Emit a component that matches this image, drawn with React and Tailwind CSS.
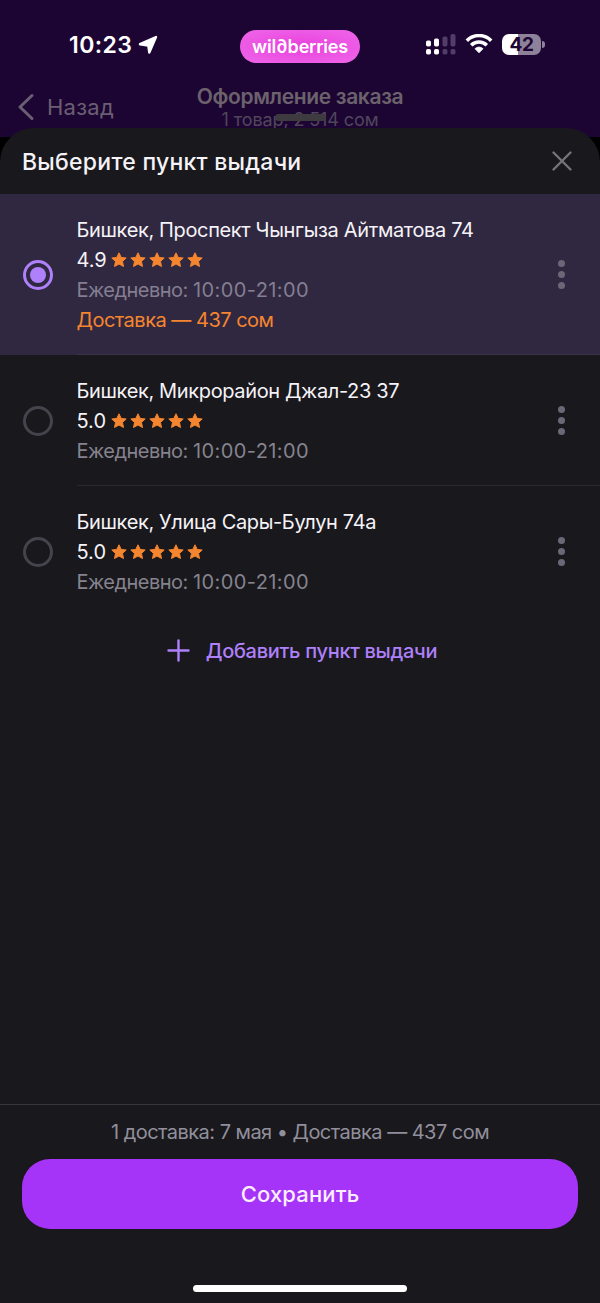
import { useState } from "react";

const points = [
  {
    id: 1,
    address: "Бишкек, Проспект Чынгыза Айтматова 74",
    rating: "4.9",
    hours: "10:00-21:00",
    delivery: "Доставка — 437 сом",
  },
  {
    id: 2,
    address: "Бишкек, Микрорайон Джал-23 37",
    rating: "5.0",
    hours: "10:00-21:00",
  },
  {
    id: 3,
    address: "Бишкек, Улица Сары-Булун 74а",
    rating: "5.0",
    hours: "10:00-21:00",
  },
];

function Star() {
  return (
    <svg width="16" height="16" viewBox="0 0 16 16">
      <path
        d="M8 .8l2.200 4.600 5 .6-3.700 3.400 1 5.100L8 12l-4.500 2.500 1-5.100L.8 6l5-.6z"
        fill="#f5852f"
        stroke="#f5852f"
        strokeWidth="1"
        strokeLinejoin="round"
      />
    </svg>
  );
}

function StatusBar() {
  return (
    <div className="flex h-[33px] items-center pl-[69px] text-white">
      <div className="flex w-[171px] items-center pb-[3px]">
        <span className="w-[69px] whitespace-nowrap text-[23px] font-semibold tracking-[0.45px]">
          10:23
        </span>
        <svg width="20" height="20" viewBox="0 0 20 20" className="-mt-[1px]">
          <path
            d="M18 2L11.300 17.600 10.300 10.600 2 9.200z"
            fill="#fff"
            stroke="#fff"
            strokeWidth="2.400"
            strokeLinejoin="round"
          />
        </svg>
      </div>
      <div
        aria-label="wildberries"
        className="flex h-[33px] w-[120px] items-center justify-center rounded-full bg-radial from-[#e83fdc] to-[#ef66ea]">
        <span className="whitespace-nowrap text-[18px] font-semibold leading-none tracking-[-0.2px]">
          wil∂berries
        </span>
      </div>
      <div className="ml-[65px] flex items-center pb-[5px]">
        <svg width="32" height="21" viewBox="0 0 32 21">
          <g fill="#fff">
            <rect x="1" y="6.500" width="5" height="6" rx="1.800" />
            <rect x="1" y="15" width="5" height="5.500" rx="1.800" />
            <rect x="9" y="4.500" width="5" height="8" rx="1.800" />
            <rect x="9" y="15" width="5" height="5.500" rx="1.800" />
          </g>
          <g fill="#513d67">
            <rect x="17.500" y="2.500" width="5" height="10" rx="1.800" />
            <rect x="17.500" y="15" width="5" height="5.500" rx="1.800" />
            <rect x="25.500" y="0" width="5" height="12.500" rx="1.800" />
            <rect x="25.500" y="15" width="5" height="5.500" rx="1.800" />
          </g>
        </svg>
        <svg width="28" height="20" viewBox="0 0 28 20" className="ml-[8px]">
          <g fill="none" stroke="#fff" strokeWidth="3.500">
            <path d="M1.800 6.700a17 17 0 0 1 24.400 0" />
            <path d="M6.200 11.300a11 11 0 0 1 15.600 0" />
          </g>
          <path
            d="M14 18.800l-4-4.100a5.700 5.700 0 0 1 8 0z"
            fill="#fff"
            stroke="#fff"
            strokeWidth=".8"
            strokeLinejoin="round"
          />
        </svg>
        <div className="ml-[9px] flex items-center gap-[1px]">
          <div className="flex h-[21px] w-[39px] items-center justify-center rounded-[7px] bg-linear-to-r from-white from-42% to-[#8e829b] to-42% text-[19px] font-bold leading-none tracking-[-0.5px] text-[#1d0533]">
            42
          </div>
          <div className="h-[7px] w-[3px] rounded-r-full bg-[#8e829b]" />
        </div>
      </div>
    </div>
  );
}

function PageHeader() {
  return (
    <header className="h-[137px] overflow-hidden bg-[#1d0533] pt-[30px]">
      <StatusBar />
      <div className="mt-[21px] grid grid-cols-[190px_1fr_190px] text-[#6a5f72]">
        <button className="flex h-[46px] items-center pl-[17px]">
          <svg width="18" height="28" viewBox="0 0 18 28" fill="none">
            <path
              d="M15 2.500L3 14l12 11.500"
              stroke="currentColor"
              strokeWidth="3"
              strokeLinecap="round"
              strokeLinejoin="round"
            />
          </svg>
          <span className="ml-[12px] text-[22px] tracking-[0.25px]">Назад</span>
        </button>
        <div className="flex flex-col items-center whitespace-nowrap">
          <span className="text-[21px] font-semibold leading-[26px] tracking-[-0.36px] text-[#6b626c]">
            Оформление заказа
          </span>
          <span className="text-[18px] leading-[20px] tracking-[-0.1px] text-[#50465b]">
            1 товар, 2 514 сом
          </span>
        </div>
      </div>
    </header>
  );
}

function PickupPoint({ point, selected, last, onSelect }) {
  return (
    <div
      onClick={onSelect}
      className={`flex cursor-pointer pl-[23px] ${selected ? "bg-[#302840]" : ""}`}>
      <div
        className={`flex size-[30px] shrink-0 items-center justify-center self-center rounded-full border-3 ${
          selected ? "border-[#ae80fa]" : "border-[#45444d]"
        }`}>
        {selected && <div className="size-[16px] rounded-full bg-[#ae80fa]" />}
      </div>
      <div
        className={`ml-[24px] flex flex-1 items-center justify-between border-b pt-[21px] pb-[19px] pr-[35px] ${
          last ? "border-transparent" : selected ? "border-[#3b3449]" : "border-[#29292f]"
        }`}>
        <div className="-ml-[0.5px] whitespace-nowrap text-[20px] leading-[30px]">
          <p className="tracking-[-0.36px] text-[#f5f3f8]">{point.address}</p>
          <div className="flex items-center gap-[3px]">
            <span className="w-[31px] text-[#f5f3f8]">{point.rating}</span>
            {Array(5)
              .fill()
              .map((_, i) => (
                <Star key={i} />
              ))}
          </div>
          <p className={selected ? "text-[#847e91]" : "text-[#85838e]"}>
            <span className="tracking-[-0.5px]">Ежедневно: </span>
            <span className="tracking-[0.4px]">{point.hours}</span>
          </p>
          {point.delivery && (
            <p className="tracking-[-0.5px] text-[#f5852f]">{point.delivery}</p>
          )}
        </div>
        <button aria-label="Ещё" className="-mt-[1px] flex flex-col gap-[4px]">
          <span className="size-[7px] rounded-full bg-[#6c6777]" />
          <span className="size-[7px] rounded-full bg-[#6c6777]" />
          <span className="size-[7px] rounded-full bg-[#6c6777]" />
        </button>
      </div>
    </div>
  );
}

export default function App() {
  const [selectedId, setSelectedId] = useState(1);

  return (
    <div className="flex h-[1303px] w-[600px] flex-col overflow-hidden bg-black font-[Inter,sans-serif]">
      <PageHeader />

      <main className="relative -mt-[9px] flex flex-1 flex-col rounded-t-[34px] bg-[#19181c]">
        {/* drag handle */}
        <div className="absolute -top-[14px] left-[275px] h-[7px] w-[51px] rounded-full bg-[#3d3b40]" />

        <div className="flex h-[66px] items-center justify-between pl-[22px] pr-[28px]">
          <h1 className="whitespace-nowrap pt-[2px] text-[23px] font-medium tracking-[0.25px] text-[#f5f3f8]">
            Выберите пункт выдачи
          </h1>
          <button aria-label="Закрыть">
            <svg width="20" height="20" viewBox="0 0 20 20">
              <path
                d="M1.500 1.500l17 17M18.500 1.500l-17 17"
                stroke="#77757b"
                strokeWidth="2.300"
                strokeLinecap="round"
              />
            </svg>
          </button>
        </div>

        {points.map((point, index) => (
          <PickupPoint
            key={point.id}
            point={point}
            selected={point.id === selectedId}
            last={index === points.length - 1}
            onSelect={() => setSelectedId(point.id)}
          />
        ))}

        <button className="mt-[19px] flex h-[30px] items-center justify-center gap-[16px] pl-[4px] text-[#ae80fa]">
          <svg width="23" height="23" viewBox="0 0 23 23" className="-mt-[1px]">
            <path
              d="M11.500 1.500v20M1.500 11.500h20"
              stroke="currentColor"
              strokeWidth="2.400"
              strokeLinecap="round"
            />
          </svg>
          <span className="whitespace-nowrap text-[20px] font-medium tracking-[-0.3px]">
            Добавить пункт выдачи
          </span>
        </button>

        <footer className="mt-auto flex h-[199px] flex-col items-center border-t border-[#37363c] pt-[12px]">
          <p className="whitespace-nowrap text-[20px] leading-[30px] tracking-[-0.53px] text-[#918f9b]">
            1 доставка: 7 мая • Доставка — 437 сом
          </p>
          <button className="mt-[12px] h-[70px] w-[556px] rounded-[28px] bg-[#a633f8] text-[22px] font-medium tracking-[0.15px] text-[#fbeeff]">
            Сохранить
          </button>
          <div className="mt-[56px] h-[7px] w-[214px] rounded-full bg-white" />
        </footer>
      </main>
    </div>
  );
}
